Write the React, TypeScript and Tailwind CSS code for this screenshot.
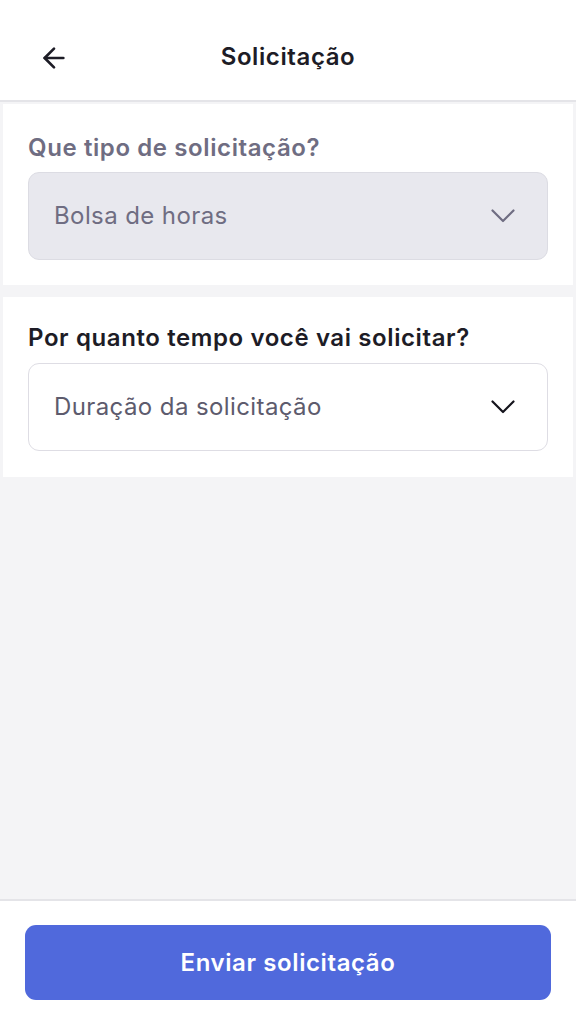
import { ArrowLeft } from 'lucide-react'

function Chevron({ className }: { className?: string }) {
  return (
    <svg width="24" height="14" viewBox="0 0 24 14" fill="none" className={className}>
      <polyline
        points="1.5,1.5 12,12 22.5,1.5"
        stroke="currentColor"
        strokeWidth="2.2"
        strokeLinecap="round"
        strokeLinejoin="round"
      />
    </svg>
  )
}

function SelectField({
  label,
  value,
  disabled,
  className,
}: {
  label: string
  value: string
  disabled?: boolean
  className?: string
}) {
  return (
    <section className={'mx-[3px] bg-white px-[25px] ' + (className ?? '')}>
      <h2
        className={
          'text-[24px] leading-[32px] font-semibold tracking-[0.6px] ' +
          (disabled ? 'text-[#6f6d82]' : 'text-[#1d1c26]')
        }
      >
        {label}
      </h2>
      <button
        type="button"
        className={
          'flex h-[88px] w-full items-center justify-between rounded-[11px] border pr-[32px] pl-[25px] text-left ' +
          (disabled
            ? 'mt-[8px] border-[#dcdce3] bg-[#e8e8ee] text-[#6f6d82]'
            : 'mt-[9px] border-[#dedde4] bg-white text-[#5d5b6d]')
        }
      >
        <span className="text-[24px] tracking-[0.4px]">{value}</span>
        <Chevron className={disabled ? 'text-[#6f6d82]' : 'text-[#15141c]'} />
      </button>
    </section>
  )
}

export default function App() {
  return (
    <div className="flex h-screen flex-col bg-[#f4f4f6] font-['Inter','Noto_Sans',sans-serif]">
      <header className="relative flex h-[102px] shrink-0 items-center justify-center border-b-2 border-[#e4e4e8] bg-white pt-[14px]">
        <button type="button" aria-label="Voltar" className="absolute left-[38px] top-[42px] text-[#1d1c26]">
          <ArrowLeft size={32} strokeWidth={2} />
        </button>
        <h1 className="text-[24px] font-semibold tracking-[0.6px] text-[#1d1c26]">Solicitação</h1>
      </header>

      <main className="flex flex-1 flex-col gap-[12px] pt-[2px]">
        <SelectField
          label="Que tipo de solicitação?"
          value="Bolsa de horas"
          disabled
          className="pt-[28px] pb-[25px]"
        />
        <SelectField
          label="Por quanto tempo você vai solicitar?"
          value="Duração da solicitação"
          className="pt-[25px] pb-[26px]"
        />
      </main>

      <footer className="shrink-0 border-t-2 border-[#e4e4e8] bg-white px-[25px] pt-[24px] pb-[24px]">
        <button
          type="button"
          className="h-[75px] w-full rounded-[11px] bg-[#5069dc] text-[24px] font-semibold tracking-[0.6px] text-white"
        >
          Enviar solicitação
        </button>
      </footer>
    </div>
  )
}
